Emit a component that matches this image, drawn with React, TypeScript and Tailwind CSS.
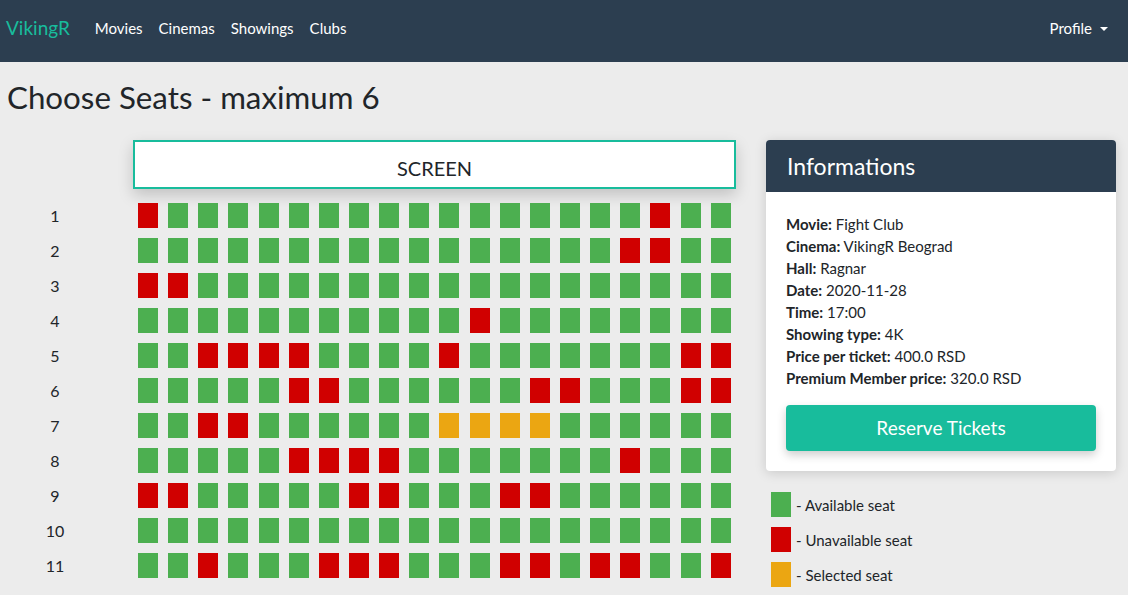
import React from "react";

type SeatRow = { red: number[]; sel?: number[] };

const seatRows: SeatRow[] = [
  { red: [0, 17] },
  { red: [16, 17] },
  { red: [0, 1] },
  { red: [11] },
  { red: [2, 3, 4, 5, 10, 18, 19] },
  { red: [5, 6, 13, 14, 18, 19] },
  { red: [2, 3], sel: [10, 11, 12, 13] },
  { red: [5, 6, 7, 8, 16] },
  { red: [0, 1, 7, 8, 12, 13] },
  { red: [] },
  { red: [2, 6, 7, 8, 12, 13, 15, 16, 19] },
];

const info = [
  { label: "Movie:", value: "Fight Club" },
  { label: "Cinema:", value: "VikingR Beograd" },
  { label: "Hall:", value: "Ragnar" },
  { label: "Date:", value: "2020-11-28" },
  { label: "Time:", value: "17:00" },
  { label: "Showing type:", value: "4K" },
  { label: "Price per ticket:", value: "400.0 RSD" },
  { label: "Premium Member price:", value: "320.0 RSD" },
];

const legend = [
  { color: "bg-[#4caf50]", label: "- Available seat" },
  { color: "bg-[#d00000]", label: "- Unavailable seat" },
  { color: "bg-[#eba612]", label: "- Selected seat" },
];

function seatColor(row: SeatRow, i: number) {
  if (row.sel?.includes(i)) return "bg-[#eba612]";
  if (row.red.includes(i)) return "bg-[#d00000]";
  return "bg-[#4caf50]";
}

export default function App() {
  return (
    <div className="min-h-screen bg-[#ececec] font-['Lato','Noto_Sans',sans-serif] text-[#212529]">
      {/* Navbar */}
      <div className="h-[62px] bg-[#2c3e50] flex items-center pl-[6px] pr-[20px] pb-[5px]">
        <span className="text-[#18bc9c] text-[19px] mr-[25px]">VikingR</span>
        <div className="flex items-center gap-4 text-white text-[15px]">
          <span>Movies</span>
          <span>Cinemas</span>
          <span>Showings</span>
          <span>Clubs</span>
        </div>
        <div className="ml-auto flex items-center text-white text-[15px]">
          <span>Profile</span>
          <span className="ml-[8px] w-0 h-0 border-l-[4.5px] border-r-[4.5px] border-t-[4.5px] border-l-transparent border-r-transparent border-t-white" />
        </div>
      </div>

      {/* Title */}
      <h1 className="mt-4 ml-[7px] text-[31.3px] leading-[38.4px]">Choose Seats - maximum 6</h1>

      <div className="flex mt-[24px]">
        {/* Seats */}
        <div className="w-[766px]">
          <div className="pl-[133px]">
            <div className="w-[603px] h-[49px] border-2 border-[#18bc9c] bg-white shadow-[0_6px_14px_rgba(0,0,0,0.18)] flex items-center justify-center pt-[6px] text-[20px]">
              SCREEN
            </div>
          </div>
          <div className="mt-[14px] flex flex-col gap-[10px]">
            {seatRows.map((row, r) => (
              <div key={r} className="flex items-center h-[25px]">
                <span className="w-[110px] text-center text-[16px]">{r + 1}</span>
                <div className="ml-[28px] flex gap-x-[10.15px]">
                  {Array.from({ length: 20 }).map((_, i) => (
                    <span key={i} className={`w-[20px] h-[25px] ${seatColor(row, i)}`} />
                  ))}
                </div>
              </div>
            ))}
          </div>
        </div>

        {/* Info panel */}
        <div className="w-[350px]">
          <div className="rounded-[4px] overflow-hidden bg-white shadow-[0_2px_12px_rgba(0,0,0,0.15)]">
            <div className="h-[52px] bg-[#2c3e50] px-[21px] flex items-center text-white text-[23px]">
              Informations
            </div>
            <div className="px-[20px] pt-[21px] pb-[20px]">
              {info.map((item) => (
                <div key={item.label} className="text-[15px] leading-[22px]">
                  <b className="font-bold">{item.label}</b> {item.value}
                </div>
              ))}
              <button className="mt-[16px] w-full h-[46px] rounded-[4px] bg-[#18bc9c] text-white text-[19px] shadow-[0_4px_10px_rgba(0,0,0,0.2)]">
                Reserve Tickets
              </button>
            </div>
          </div>

          {/* Legend */}
          <div className="mt-[21px] pl-[5px] flex flex-col gap-[10px]">
            {legend.map((l) => (
              <div key={l.label} className="flex items-center">
                <span className={`w-[20px] h-[25px] ${l.color}`} />
                <span className="ml-[5px] text-[15px]">{l.label}</span>
              </div>
            ))}
          </div>
        </div>
      </div>
    </div>
  );
}
